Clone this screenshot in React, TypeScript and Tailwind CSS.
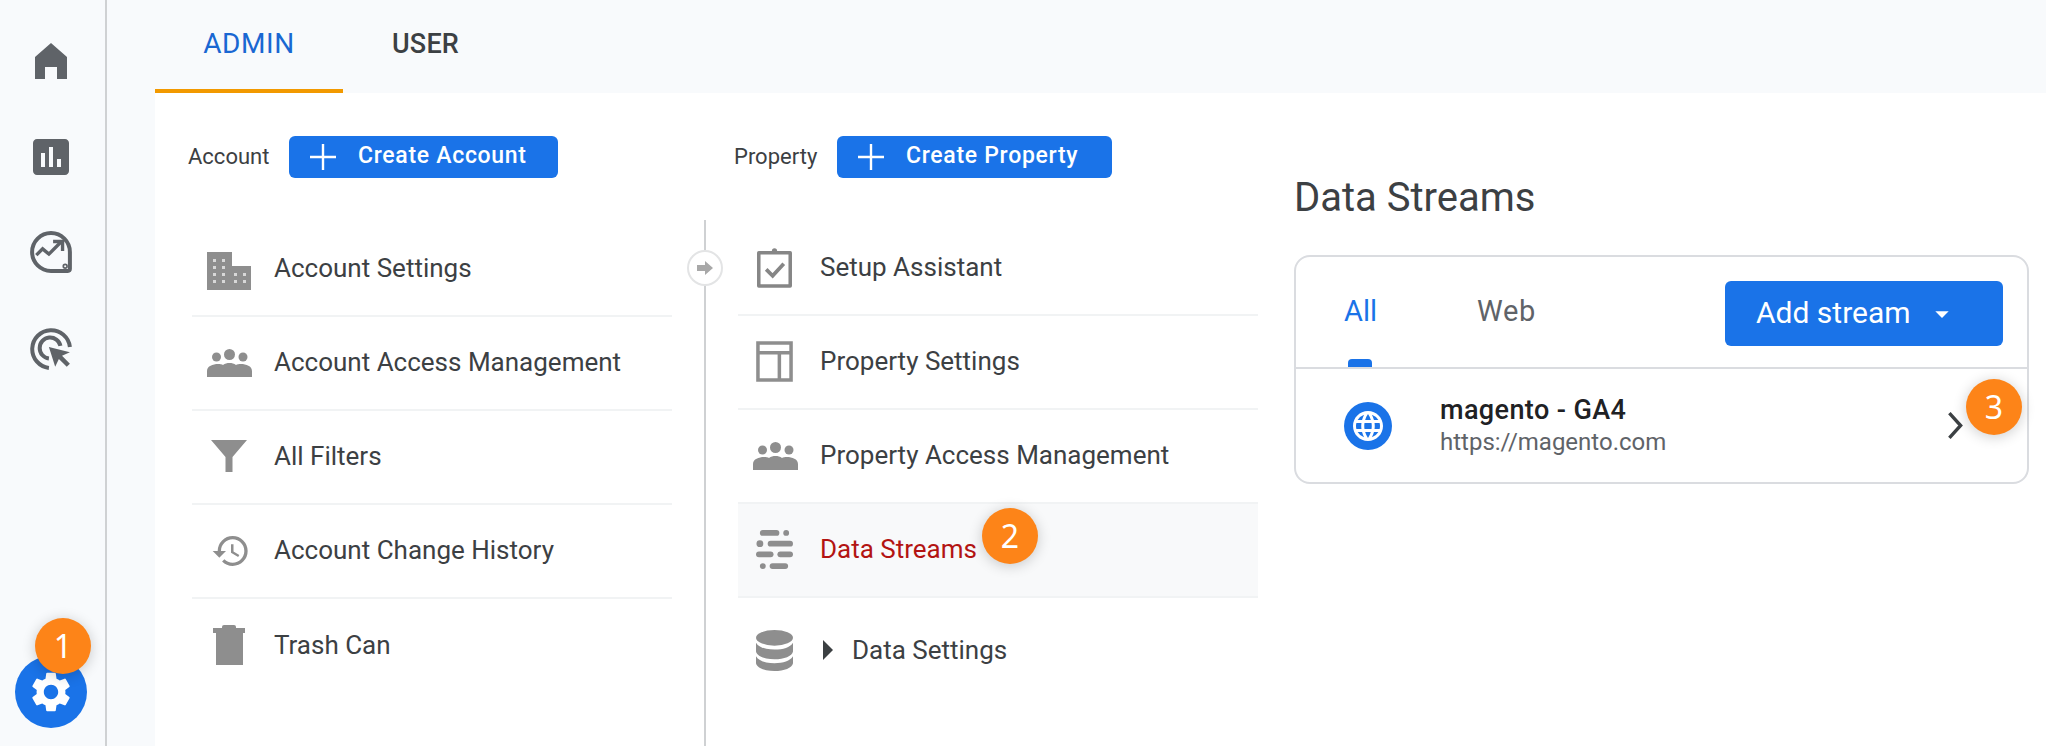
import { ReactNode } from "react";
import { MdAssessment, MdSettings, MdHistory, MdLanguage, MdArrowDropDown } from "react-icons/md";

const font = "font-['Roboto',sans-serif]";

const HomeIcon = () => (
  <svg viewBox="0 0 32 36" className="w-[32px] h-[36px]" fill="#5f6368">
    <path d="M16 0 32 14V36H22V24H10V36H0V14Z" />
  </svg>
);

const InsightsIcon = () => (
  <svg viewBox="0 0 40 40" className="w-[42px] h-[42px]" fill="none" stroke="#5f6368" strokeWidth="3.8">
    <path d="M38 20A18 18 0 1 0 20 38H36a2 2 0 0 0 2-2Z" />
    <path d="M6 23l6-6 6 5 11-11" strokeWidth="3.2" />
    <path d="M22 10h9v9" strokeWidth="3.2" />
    <circle cx="33.5" cy="33.5" r="1.8" strokeWidth="1.6" fill="#f8f9fb" />
  </svg>
);

const AdsIcon = () => (
  <svg viewBox="0 0 40 40" className="w-[42px] h-[42px]" fill="none" stroke="#5f6368" strokeWidth="3.8">
    <path d="M38 18A18 18 0 1 0 18 38" />
    <path d="M29 17A10 10 0 1 0 18 29" />
    <path d="M18 18l6 19 3.5-7.5L35 37l3-3-7.5-7.5L38 23Z" fill="#5f6368" stroke="none" />
  </svg>
);

const BuildingIcon = () => (
  <svg viewBox="0 0 44 38" className="w-[44px] h-[38px] mt-[4px]">
    <path d="M0 0H25V14H44V38H0Z" fill="#8e8e8e" />
    <g fill="#d8d8d8">
      <rect x="6" y="7" width="3" height="3" />
      <rect x="15" y="7" width="3" height="3" />
      <rect x="6" y="14" width="3" height="3" />
      <rect x="15" y="14" width="3" height="3" />
      <rect x="6" y="21" width="3" height="3" />
      <rect x="15" y="21" width="3" height="3" />
      <rect x="6" y="28" width="3" height="3" />
      <rect x="15" y="28" width="3" height="3" />
      <rect x="27" y="21" width="3" height="3" />
      <rect x="36" y="21" width="3" height="3" />
      <rect x="27" y="28" width="3" height="3" />
      <rect x="36" y="28" width="3" height="3" />
    </g>
  </svg>
);

const PeopleIcon = () => (
  <svg viewBox="0 0 45 28" className="w-[45px] h-[28px]" fill="#8e8e8e">
    <circle cx="9.5" cy="8" r="4.5" />
    <circle cx="22.5" cy="5.5" r="5.5" />
    <circle cx="36" cy="8" r="4.5" />
    <path d="M0 28v-6c0-5 6-7 11-7 2 0 4 .3 5 1 2-1.5 4-2 6.5-2s4.5.5 6.5 2c1-.7 3-1 5-1 5 0 11 2 11 7v6Z" />
  </svg>
);

const FunnelIcon = () => (
  <svg viewBox="0 0 36 32" className="w-[36px] h-[32px] -mt-[2px]" fill="#8e8e8e">
    <path d="M0 0H36L21.5 17V32H14.5V17Z" />
  </svg>
);

const TrashIcon = () => (
  <svg viewBox="0 0 32 40" className="w-[32px] h-[40px] -mt-[2px]" fill="#8e8e8e">
    <rect x="9" y="0" width="14" height="6" rx="2" />
    <rect x="0" y="3" width="32" height="5" />
    <rect x="3" y="8" width="27" height="32" />
  </svg>
);

const ClipboardIcon = () => (
  <svg viewBox="0 0 40 44" className="w-[37px] h-[41px] -ml-[2px] -mt-[2px]" fill="none" stroke="#868686" strokeWidth="3.8">
    <path d="M3 6h34v36H3Z" strokeLinejoin="round" />
    <circle cx="20" cy="4" r="2.8" fill="#868686" stroke="none" />
    <path d="M11 24l7 7 12-13" strokeWidth="4" />
  </svg>
);

const LayoutIcon = () => (
  <svg viewBox="0 0 38 42" className="w-[37px] h-[41px] -ml-[2px] -mt-[2px]" fill="none" stroke="#8e8e8e" strokeWidth="3.6">
    <path d="M2 2h34v38H2ZM2 12h34M24 12v28" />
  </svg>
);

const StreamsIcon = () => (
  <svg viewBox="0 0 38 42" className="w-[37px] h-[41px] -ml-[2px] -mt-[2px]" fill="#8e8e8e">
    <rect x="4" y="1" width="20" height="6" rx="3" />
    <circle cx="31" cy="4" r="3" />
    <circle cx="4" cy="15" r="3.5" />
    <rect x="12" y="12" width="26" height="6" rx="3" />
    <rect x="0" y="23" width="18" height="6" rx="3" />
    <rect x="22" y="23" width="16" height="6" rx="3" />
    <circle cx="7" cy="38" r="3" />
    <rect x="14" y="35" width="19" height="6" rx="3" />
  </svg>
);

const DatabaseIcon = () => (
  <svg viewBox="0 0 38 42" className="w-[37px] h-[41px] -ml-[2px] -mt-[2px]" fill="#8e8e8e">
    <ellipse cx="19" cy="8" rx="19" ry="8" />
    <path d="M0 13c3 5 10 7 19 7s16-2 19-7v9c-1 5-9 8-19 8S1 27 0 22Z" />
    <path d="M0 27c3 5 10 7 19 7s16-2 19-7v7c-1 5-9 8-19 8S1 39 0 34Z" />
  </svg>
);

const PlusIcon = () => (
  <svg viewBox="0 0 26 26" className="w-[26px] h-[26px]" stroke="white" strokeWidth="2.4">
    <path d="M13 0v26M0 13h26" />
  </svg>
);

const Badge = ({ n, className }: { n: number; className: string }) => (
  <div
    className={`absolute w-[56px] h-[56px] rounded-full bg-[#fd8418] text-white flex items-center justify-center text-[32px] shadow-[0_2px_14px_rgba(0,0,0,0.2)] font-['Noto_Sans',sans-serif] ${className}`}
  >
    {n}
  </div>
);

const Row = ({
  icon,
  children,
  active,
  last,
}: {
  icon: ReactNode;
  children: ReactNode;
  active?: boolean;
  last?: boolean;
}) => (
  <div
    className={`flex items-center h-[94px] ${last ? "pt-[12px]" : "border-b-2 border-[#f1f3f4]"} ${active ? "bg-[#f8f9fa]" : ""}`}
  >
    <div className="w-[74px] flex justify-center blur-[0.5px]">{icon}</div>
    <div className={`ml-[8px] -mt-[2px] flex items-center text-[26px] ${active ? "text-[#b31412]" : "text-[#3c4043]"}`}>
      {children}
    </div>
  </div>
);

const CreateButton = ({ label, width }: { label: string; width: string }) => (
  <button className={`${width} h-[42px] rounded-[6px] bg-[#1a73e8] text-white flex items-center pl-[21px] text-[23px] font-medium tracking-[0.7px]`}>
    <PlusIcon />
    <span className="ml-[22px] -mt-[2px]">{label}</span>
  </button>
);

export default function App() {
  return (
    <div className={`flex w-[2046px] h-[746px] overflow-hidden bg-[#f8fafc] ${font}`}>
      <aside className="relative w-[107px] shrink-0 border-r-2 border-[#cfd1d3] flex flex-col items-center text-[#5f6368]">
        <div className="flex flex-col items-center w-full pr-[3px] pt-[43px]">
          <HomeIcon />
          <MdAssessment className="w-[48px] h-[48px] mt-[54px]" />
          <div className="mt-[50px]"><InsightsIcon /></div>
          <div className="mt-[55px]"><AdsIcon /></div>
        </div>
        <div className="mt-auto mb-[18px] mr-[3px] w-[72px] h-[72px] rounded-full bg-[#1a73e8] flex items-center justify-center">
          <MdSettings className="w-[48px] h-[48px] text-white" />
        </div>
        <Badge n={1} className="left-[35px] top-[618px]" />
      </aside>

      <main className="flex-1 flex flex-col pl-[48px] min-w-0">
        <div className="flex h-[93px] shrink-0">
          <div className="w-[188px] border-b-4 border-[#f29900] text-[#1967d2] flex items-center justify-center pb-[1px] text-[28px] tracking-[0.6px]">
            ADMIN
          </div>
          <div className="ml-[49px] text-[#3c4043] flex items-center pb-[5px] font-medium text-[27px] tracking-[0.2px]">USER</div>
        </div>

        <div className="flex-1 bg-white flex min-h-0">
          <section className="w-[549px] shrink-0 pl-[33px] flex flex-col">
            <div className="flex items-center mt-[43px] h-[42px]">
              <span className="w-[101px] text-[22px] text-[#3c4043] -mt-[2px]">Account</span>
              <CreateButton label="Create Account" width="w-[269px]" />
            </div>
            <div className="mt-[45px] ml-[4px] w-[480px]">
              <Row icon={<BuildingIcon />}>Account Settings</Row>
              <Row icon={<PeopleIcon />}>Account Access Management</Row>
              <Row icon={<FunnelIcon />}>All Filters</Row>
              <Row icon={<MdHistory className="w-[40px] h-[40px] ml-[4px] text-[#8e8e8e]" />}>Account Change History</Row>
              <div className="flex items-center h-[94px]">
                <div className="w-[74px] flex justify-center blur-[0.5px]"><TrashIcon /></div>
                <div className="ml-[8px] -mt-[2px] text-[26px] text-[#3c4043]">Trash Can</div>
              </div>
            </div>
          </section>

          <section className="w-[553px] shrink-0 flex flex-col">
            <div className="flex items-center mt-[43px] h-[42px] pl-[30px]">
              <span className="w-[103px] text-[22px] text-[#3c4043] -mt-[2px]">Property</span>
              <CreateButton label="Create Property" width="w-[275px]" />
            </div>
            <div className="relative flex-1 mt-[42px] border-l-2 border-[#cfd1d3] pl-[32px] pt-[2px]">
              <div className="absolute left-[-19px] top-[30px] w-[36px] h-[36px] rounded-full bg-white border-2 border-[#e3e4e5] flex items-center justify-center">
                <svg viewBox="0 0 16 14" className="w-[16px] h-[14px]" fill="#a8a8a8">
                  <path d="M0 4h8V0l8 7-8 7v-4H0Z" />
                </svg>
              </div>
              <div className="w-[520px]">
                <Row icon={<ClipboardIcon />}>Setup Assistant</Row>
                <Row icon={<LayoutIcon />}>Property Settings</Row>
                <Row icon={<PeopleIcon />}>Property Access Management</Row>
                <Row active icon={<StreamsIcon />}>Data Streams</Row>
                <Row last icon={<DatabaseIcon />}>
                  <svg viewBox="0 0 10 20" className="w-[10px] h-[20px] ml-[3px] mr-[19px]" fill="#3c4043">
                    <path d="M0 0 10 10 0 20Z" />
                  </svg>
                  Data Settings
                </Row>
              </div>
              <Badge n={2} className="left-[276px] top-[288px]" />
            </div>
          </section>

          <section className="w-[735px] shrink-0 ml-[37px] flex flex-col">
            <h1 className="mt-[81px] h-[48px] leading-[48px] text-[40px] text-[#3c4043]">Data Streams</h1>
            <div className="relative mt-[33px] h-[229px] rounded-[16px] border-2 border-[#dadce0] flex flex-col">
              <div className="h-[112px] border-b-2 border-[#dadce0] flex relative shrink-0">
                <span className="ml-[48px] mt-[38px] text-[29px] leading-[32px] text-[#1a73e8]">All</span>
                <span className="absolute left-[52px] bottom-0 w-[24px] h-[8px] rounded-t-[4px] bg-[#1a73e8]" />
                <span className="ml-[100px] mt-[38px] text-[29px] leading-[32px] tracking-[0.6px] text-[#5f6368]">Web</span>
                <button className="ml-auto mr-[24px] mt-[24px] w-[278px] h-[65px] rounded-[6px] bg-[#1a73e8] text-white flex items-center pl-[31px] text-[30px]">
                  <span className="-mt-[3px]">Add stream</span>
                  <MdArrowDropDown className="w-[32px] h-[32px] ml-[15px]" />
                </button>
              </div>
              <div className="flex-1 flex items-center pl-[48px]">
                <div className="w-[48px] h-[48px] rounded-full bg-[#1a73e8] flex items-center justify-center">
                  <MdLanguage className="w-[36px] h-[36px] text-white" />
                </div>
                <div className="ml-[48px] flex flex-col">
                  <span className="text-[27px] leading-[32px] font-medium tracking-[0.4px] text-[#202124]">magento - GA4</span>
                  <span className="text-[24px] leading-[32px] text-[#5f6368]">https://magento.com</span>
                </div>
                <svg viewBox="0 0 14 24" className="w-[16px] h-[27px] ml-auto mr-[64px]" fill="none" stroke="#3c4043" strokeWidth="3">
                  <path d="M2 1l10 11L2 23" />
                </svg>
              </div>
              <Badge n={3} className="left-[670px] top-[122px]" />
            </div>
          </section>
        </div>
      </main>
    </div>
  );
}
